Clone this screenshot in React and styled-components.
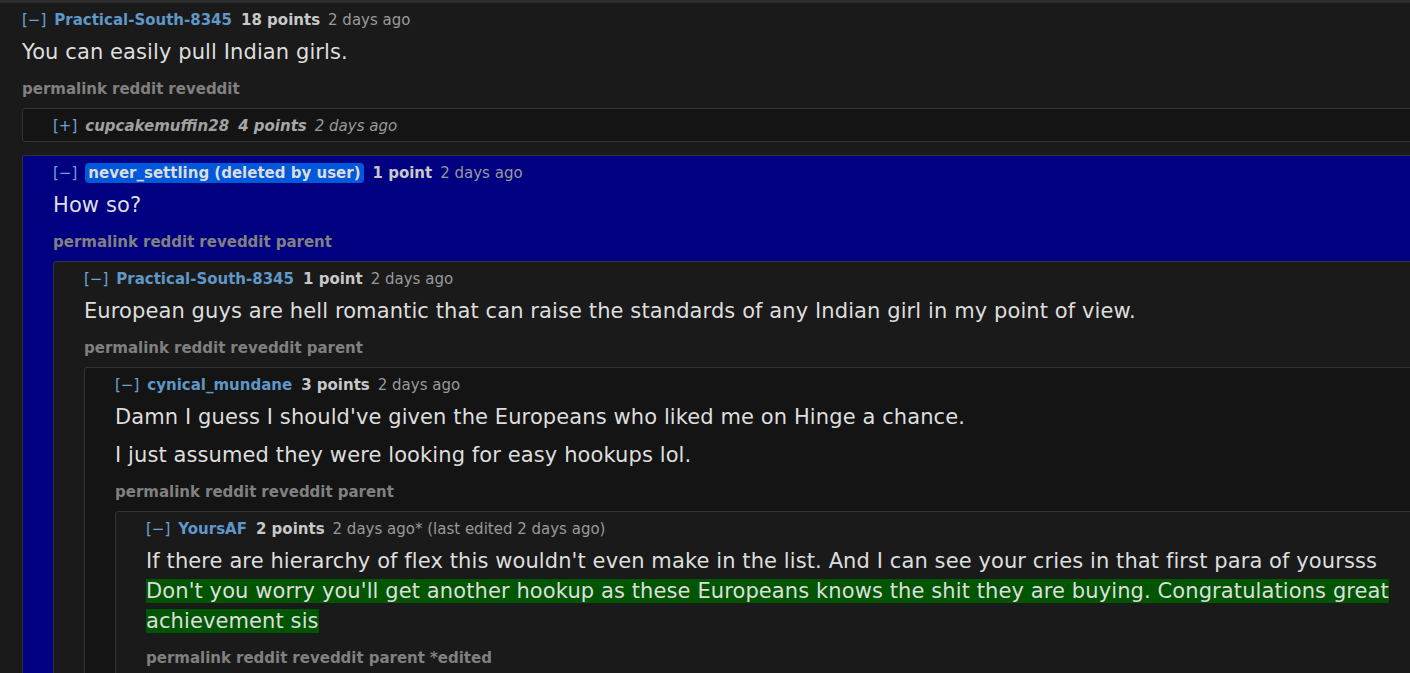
import React from "react";
import styled, { createGlobalStyle, css } from "styled-components";

const FONT = `Tahoma, "DejaVu Sans", Verdana, sans-serif`;

const Global = createGlobalStyle`
  html, body { margin: 0; padding: 0; background: #1a1a1a; overflow: hidden; }
  body { font-family: ${FONT}; }
`;

const TopStrip = styled.div`
  height: 3px;
  background: #2c2c2c;
  width: 1500px;
`;

const Root = styled.div`
  width: 1500px;
  box-sizing: border-box;
  padding: 7px 0 0 22px;
  background: #1a1a1a;
  font-family: ${FONT};
`;

const Box = styled.div`
  border: 1px solid #333;
  border-radius: 3px;
  padding: 7px 10px ${(p) => (p.$collapsed ? "5px" : "12px")} 30px;
  background: ${(p) =>
    p.$highlight ? "#000080" : p.$depth % 2 === 1 ? "#141414" : "#1a1a1a"};
`;

const Header = styled.div`
  font-size: 15px;
  line-height: 20px;
  height: 20px;
  white-space: nowrap;
  color: #999;
  ${(p) => p.$italic && css`font-style: italic;`}
`;

const Toggle = styled.span`
  color: #6fa3d6;
  font-style: normal;
  margin-right: 8px;
`;

const Author = styled.span`
  font-weight: bold;
  color: ${(p) => (p.$muted ? "#a0a0a0" : "#5f97c6")};
  margin-right: 9px;
  ${(p) =>
    p.$deleted &&
    css`
      color: #dcdcdc;
      background: #0058db;
      border-radius: 4px;
      padding: 1px 3px;
    `}
`;

const Points = styled.span`
  font-weight: bold;
  color: ${(p) => (p.$muted ? "#a8a8a8" : "#c8c8c8")};
  margin-right: 8px;
`;

const Time = styled.span`
  color: #999;
`;

const Body = styled.div`
  padding-top: 7px;
  color: #dedede;
  font-size: 21px;
  line-height: 30px;
  letter-spacing: 0.1px;
  display: flex;
  flex-direction: column;
  gap: 8px;
`;

const Para = styled.p`
  margin: 0;
`;

const Added = styled.span`
  background: #005500;
`;

const Links = styled.div`
  margin-top: 12px;
  font-size: 15px;
  line-height: 20px;
  font-weight: bold;
  color: #808080;
  display: flex;
  gap: 5px;
`;

const Children = styled.div`
  display: flex;
  flex-direction: column;
  gap: 13px;
  margin-top: 9px;
`;

function CommentHead({ collapsed, author, deleted, points, time }) {
  return (
    <Header $italic={collapsed}>
      <Toggle>{collapsed ? "[+]" : "[−]"}</Toggle>
      <Author $muted={collapsed} $deleted={deleted}>
        {author}
      </Author>
      <Points $muted={collapsed}>{points}</Points>
      <Time>{time}</Time>
    </Header>
  );
}

function Comment({ depth, highlight, collapsed, author, deleted, points, time, links, body, children }) {
  const inner = (
    <>
      <CommentHead collapsed={collapsed} author={author} deleted={deleted} points={points} time={time} />
      {!collapsed && (
        <>
          <Body>{body}</Body>
          <Links>
            {links.map((l) => (
              <span key={l}>{l}</span>
            ))}
          </Links>
          {children && <Children>{children}</Children>}
        </>
      )}
    </>
  );
  if (depth === 0) return <div>{inner}</div>;
  return (
    <Box $depth={depth} $highlight={highlight} $collapsed={collapsed}>
      {inner}
    </Box>
  );
}

export default function App() {
  const base = ["permalink", "reddit", "reveddit"];
  const withParent = [...base, "parent"];
  return (
    <>
      <Global />
      <TopStrip />
      <Root>
        <Comment
          depth={0}
          author="Practical-South-8345"
          points="18 points"
          time="2 days ago"
          links={base}
          body={<Para>You can easily pull Indian girls.</Para>}
        >
          <Comment depth={1} collapsed author="cupcakemuffin28" points="4 points" time="2 days ago" />
          <Comment
            depth={1}
            highlight
            deleted
            author="never_settling (deleted by user)"
            points="1 point"
            time="2 days ago"
            links={withParent}
            body={<Para>How so?</Para>}
          >
            <Comment
              depth={2}
              author="Practical-South-8345"
              points="1 point"
              time="2 days ago"
              links={withParent}
              body={
                <Para>
                  European guys are hell romantic that can raise the standards of any Indian girl in my point of view.
                </Para>
              }
            >
              <Comment
                depth={3}
                author="cynical_mundane"
                points="3 points"
                time="2 days ago"
                links={withParent}
                body={
                  <>
                    <Para>Damn I guess I should've given the Europeans who liked me on Hinge a chance.</Para>
                    <Para>I just assumed they were looking for easy hookups lol.</Para>
                  </>
                }
              >
                <Comment
                  depth={4}
                  author="YoursAF"
                  points="2 points"
                  time="2 days ago* (last edited 2 days ago)"
                  links={[...withParent, "*edited"]}
                  body={
                    <Para>
                      If there are hierarchy of flex this wouldn't even make in the list. And I can see your cries in
                      that first para of yoursss
                      <br />
                      <Added>
                        Don't you worry you'll get another hookup as these Europeans knows the shit they are buying.
                        Congratulations great achievement sis
                      </Added>
                    </Para>
                  }
                />
              </Comment>
            </Comment>
          </Comment>
        </Comment>
      </Root>
    </>
  );
}
